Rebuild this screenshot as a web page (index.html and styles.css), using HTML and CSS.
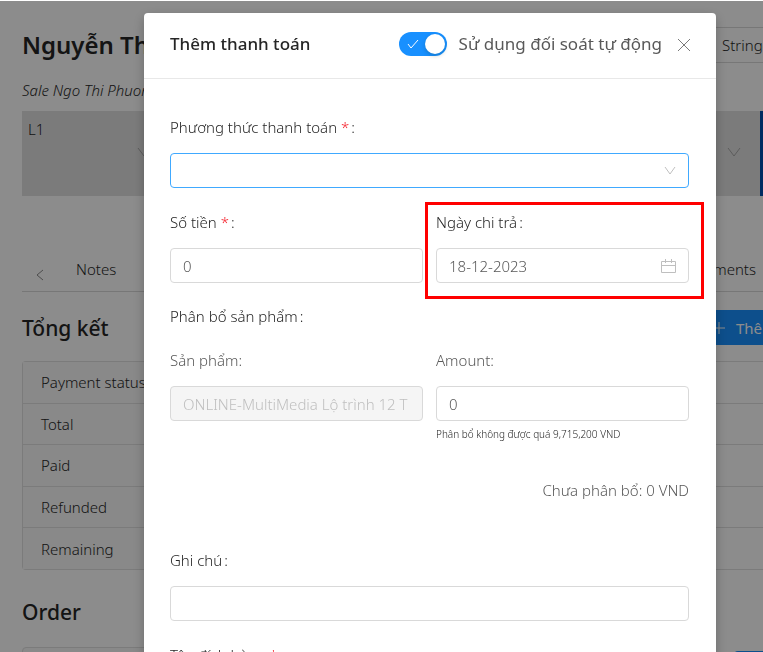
FILE: index.html
```html
<!doctype html>
<html lang="vi">

<head>
    <meta charset="utf-8">
    <meta name="viewport" content="width=device-width, initial-scale=1.0">
    <title>Thêm thanh toán</title>
    <link rel="stylesheet" href="styles.css">
</head>

<body>
    <main class="page">
        <header class="page-header">
            <h1>Nguyễn Th</h1>
            <button type="button" class="btn">Stringee</button>
        </header>
        <p class="sale">Sale Ngo Thi Phuong</p>

        <div class="stages">
            <div class="stage">
                <span>L1</span>
                <svg class="chevron" viewBox="0 0 14 10"><path d="M1 1l6 8 6-8" /></svg>
            </div>
            <div class="stage"></div>
            <div class="stage"></div>
            <div class="stage"></div>
            <div class="stage">
                <svg class="chevron" viewBox="0 0 14 10"><path d="M1 1l6 8 6-8" /></svg>
            </div>
            <div class="stage current"></div>
        </div>

        <nav class="tabs">
            <svg class="prev" viewBox="0 0 8 12"><path d="M7 1L1 6l6 5" /></svg>
            <a href="#notes">Notes</a>
            <a href="#payments" class="last">Payments</a>
        </nav>

        <div class="section-head">
            <h2>Tổng kết</h2>
            <button type="button" class="btn primary">
                <svg viewBox="0 0 14 14"><path d="M7 1v12M1 7h12" /></svg>
                Thêm
            </button>
        </div>
        <table class="summary">
            <tr><th scope="row">Payment status</th><td></td></tr>
            <tr><th scope="row">Total</th><td></td></tr>
            <tr><th scope="row">Paid</th><td></td></tr>
            <tr><th scope="row">Refunded</th><td></td></tr>
            <tr><th scope="row">Remaining</th><td></td></tr>
        </table>

        <h2 class="order-title">Order</h2>
        <div class="order">
            <div class="order-card"></div>
            <div class="order-action"></div>
        </div>
    </main>

    <div class="mask">
        <section class="modal" role="dialog" aria-labelledby="modalTitle">
            <header class="modal-header">
                <h3 id="modalTitle">Thêm thanh toán</h3>
                <label class="switch">
                    <input type="checkbox" role="switch" checked>
                    <span class="track">
                        <svg viewBox="0 0 12 10"><path d="M1 5l3 4 7-8" /></svg>
                        <span class="knob"></span>
                    </span>
                    Sử dụng đối soát tự động
                </label>
                <button type="button" class="close" aria-label="Close">
                    <svg viewBox="0 0 14 14"><path d="M1 1l12 12M13 1L1 13" /></svg>
                </button>
            </header>

            <form class="modal-body">
                <div class="field">
                    <label for="method">Phương thức thanh toán <i>*</i><span class="colon">:</span></label>
                    <div class="control focused">
                        <select id="method">
                            <option></option>
                        </select>
                        <svg class="arrow" viewBox="0 0 12 8"><path d="M1 0l5 7 5-7" /></svg>
                    </div>
                </div>

                <div class="row">
                    <div class="field">
                        <label for="money">Số tiền <i>*</i><span class="colon">:</span></label>
                        <div class="control"><input type="text" id="money" value="0"></div>
                    </div>
                    <div class="field highlight">
                        <label for="paidDate">Ngày chi trả<span class="colon">:</span></label>
                        <div class="control">
                            <input type="text" id="paidDate" value="18-12-2023">
                            <svg class="calendar" viewBox="0 0 16 16"><path d="M1.500 3.500h14v11h-14zM1.500 7.500h14M5.500 1v4M11.500 1v4" /></svg>
                        </div>
                    </div>
                </div>

                <p class="group-title">Phân bổ sản phẩm<span class="colon">:</span></p>
                <div class="row">
                    <div class="field sub">
                        <label for="product">Sản phẩm:</label>
                        <div class="control disabled"><input type="text" id="product" value="ONLINE-MultiMedia Lộ trình 12 T" disabled></div>
                    </div>
                    <div class="field sub">
                        <label for="amount">Amount:</label>
                        <div class="control"><input type="text" id="amount" value="0"></div>
                        <small>Phân bổ không được quá 9,715,200 VND</small>
                    </div>
                </div>
                <p class="remain">Chưa phân bổ: 0 VND</p>

                <div class="field">
                    <label for="note">Ghi chú<span class="colon">:</span></label>
                    <div class="control"><input type="text" id="note"></div>
                </div>
                <div class="field">
                    <label for="bankAccount">Tên đích hàng <i>*</i><span class="colon">:</span></label>
                    <div class="control"><input type="text" id="bankAccount"></div>
                </div>
            </form>
        </section>
    </div>
</body>

</html>
```

FILE: styles.css
```css
* {
    box-sizing: border-box;
}

html, body {
    margin: 0;
    height: 100%;
    overflow: hidden;
}

body {
    font-family: 'Noto Sans', 'Open Sans', sans-serif;
    font-size: 15px;
    font-weight: 300;
    line-height: 20px;
    color: #262626;
    background: #ffffff;
}

h1, h2, h3, p {
    margin: 0;
}

svg {
    display: block;
    flex: none;
    fill: none;
    stroke: currentColor;
}

input, select, button {
    font: inherit;
    color: inherit;
}

a {
    color: inherit;
    text-decoration: none;
}

/* Customer page, behind the modal */
.page {
    padding: 27px 0 0 22px;
}

.page-header, .section-head {
    display: flex;
    justify-content: space-between;
    align-items: center;
    height: 36px;
}

h1 {
    font-size: 24px;
    font-weight: 600;
}

h2 {
    font-size: 21px;
    font-weight: 500;
    line-height: 32px;
}

.btn {
    display: flex;
    align-items: center;
    gap: 10px;
    width: 60px;
    height: 36px;
    padding: 0 0 0 18px;
    overflow: hidden;
    border: 1px solid #d9d9d9;
    border-right: 0;
    background: #ffffff;
    white-space: nowrap;
}

.btn.primary {
    height: 35px;
    padding-left: 9px;
    border: 0;
    background: #1890ff;
    color: #ffffff;
    font-weight: 400;
}

.btn svg {
    width: 14px;
}

.sale {
    margin-top: 17px;
    font-style: italic;
}

.stages {
    display: flex;
    height: 85px;
    margin-top: 11px;
}

.stage {
    flex: 1;
    display: flex;
    justify-content: space-between;
    padding: 8px 19px 0 6px;
    background: #e1e1e1;
}

.stage.current {
    flex: none;
    width: 3px;
    padding: 0;
    background: #0050b3;
}

.chevron {
    width: 14px;
    height: 10px;
    margin: 28px 0 0 auto;
    color: #a8a8a8;
}

.tabs {
    display: flex;
    align-items: center;
    height: 96px;
    padding: 50px 7px 0 14px;
    border-bottom: 1px solid #d9d9d9;
}

.tabs .prev {
    width: 8px;
    margin: 12px 32px 0 0;
    color: #8c8c8c;
}

.tabs .last {
    margin-left: auto;
}

.section-head {
    height: 35px;
    margin: 18px 0 16px;
}

.summary {
    width: 100%;
    height: 209px;
    border-spacing: 0;
    border: 1px solid #e0e0e0;
    border-right: 0;
    border-radius: 4px 0 0 4px;
}

.summary th {
    width: 150px;
    padding: 10px 0 10px 18px;
    font-weight: 300;
    text-align: left;
    white-space: nowrap;
    background: #fafafa;
}

.summary tr + tr > * {
    border-top: 1px solid #e0e0e0;
}

.order-title {
    margin: 26px 0 19px;
}

.order {
    display: flex;
    justify-content: space-between;
}

.order-card {
    width: 60%;
    height: 60px;
    border: 1px solid #e0e0e0;
    border-radius: 4px;
    background: #fafafa;
}

.order-action {
    width: 29px;
    height: 36px;
    margin-top: 4px;
    border-radius: 4px 0 0 4px;
    background: #1890ff;
}

/* Modal */
.mask {
    position: fixed;
    inset: 1px 0 0;
    padding: 12px 47px 0 144px;
    overflow: hidden;
    background: rgba(0, 0, 0, 0.45);
}

.modal {
    background: #ffffff;
    border-radius: 4px;
    box-shadow: 0 4px 12px rgba(0, 0, 0, 0.25);
}

.modal-header {
    display: flex;
    align-items: center;
    height: 66px;
    padding: 0 24px 4px 26px;
    border-bottom: 1px solid #e8e8e8;
}

h3 {
    margin-right: auto;
    font-size: 17px;
    font-weight: 500;
}

.switch {
    display: flex;
    align-items: center;
    gap: 12px;
    font-size: 17px;
    font-weight: 400;
    color: #595959;
    white-space: nowrap;
}

.switch input {
    position: absolute;
    opacity: 0;
}

.track {
    display: flex;
    align-items: center;
    justify-content: space-between;
    width: 48px;
    height: 24px;
    padding: 0 2px 0 8px;
    border-radius: 12px;
    background: #1890ff;
    color: #ffffff;
}

.track svg {
    width: 12px;
}

.knob {
    width: 20px;
    height: 20px;
    border-radius: 50%;
    background: #ffffff;
    box-shadow: 0 2px 4px rgba(0, 35, 11, 0.2);
}

.close {
    margin-left: 14px;
    padding: 2px 1px 0;
    border: 0;
    background: none;
    color: #7a7a7a;
}

.close svg {
    width: 14px;
}

.modal-body {
    display: grid;
    gap: 17px;
    padding: 31px 27px 24px 26px;
}

.row {
    display: grid;
    grid-template-columns: 1fr 1fr;
    gap: 13px;
}

.field {
    min-width: 0;
}

.field label {
    display: block;
    margin-bottom: 9px;
    line-height: 34px;
}

.field i {
    color: #f5222d;
    font-style: normal;
}

.colon {
    margin-left: 2px;
}

.sub label {
    color: #595959;
}

.control {
    display: flex;
    align-items: center;
    height: 35px;
    padding: 0 12px;
    border: 1px solid #d9d9d9;
    border-radius: 4px;
    color: #595959;
}

.control.focused {
    border-color: #40a9ff;
}

.control.disabled {
    background: #f5f5f5;
    color: #bfbfbf;
}

.control input, .control select {
    flex: 1;
    min-width: 0;
    padding: 0;
    border: 0;
    outline: 0;
    background: none;
    appearance: none;
}

.arrow {
    width: 12px;
    color: #bfbfbf;
}

.calendar {
    width: 16px;
    color: #bfbfbf;
}

.highlight {
    position: relative;
}

.highlight::after {
    content: '';
    position: absolute;
    inset: -3px -15px -16px -11px;
    border: 3px solid #ff0000;
    pointer-events: none;
}

.group-title {
    margin-bottom: -6px;
    line-height: 32px;
}

small {
    display: block;
    margin-top: 3px;
    font-size: 10px;
}

.remain {
    margin: 18px 0 25px;
    line-height: 22px;
    color: #595959;
    text-align: right;
}
```
